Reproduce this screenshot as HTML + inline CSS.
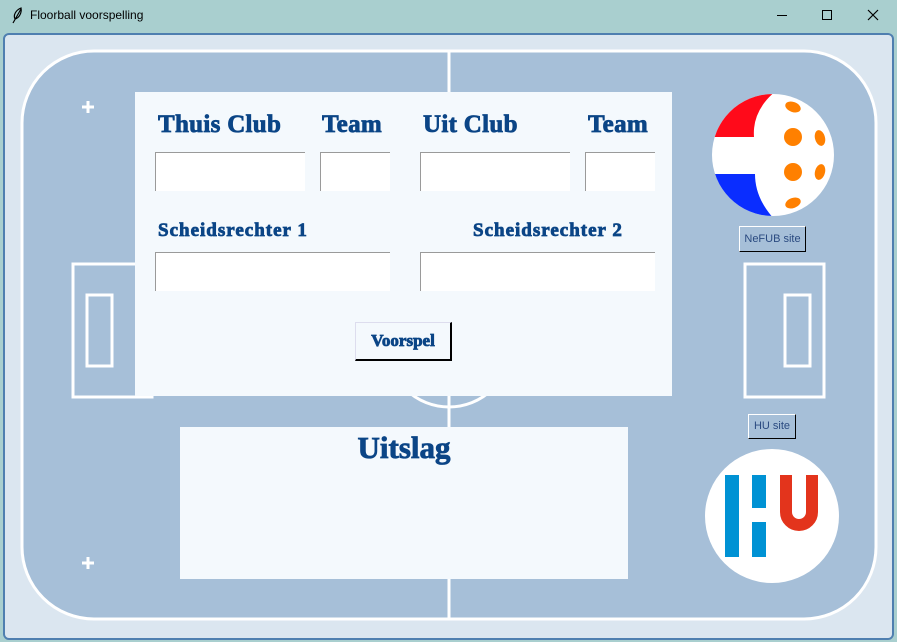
<!DOCTYPE html>
<html><head><meta charset="utf-8"><style>
*{margin:0;padding:0;box-sizing:border-box}
body{width:897px;height:642px;overflow:hidden;background:#a9cfcf;position:relative;font-family:"Liberation Sans",sans-serif}
.a{position:absolute}
.t{font-family:"Liberation Serif",serif;font-weight:bold;color:#0b4586;white-space:nowrap;-webkit-text-stroke:0.8px #0b4586}
.in{position:absolute;background:#fff;border-top:1px solid #9a9a9a;border-left:1px solid #9a9a9a}
.btn{position:absolute;background:#a6bfd8;border:1px solid #fff;border-right:1px solid #000;border-bottom:1px solid #000;font-size:11px;color:#2a4a80;text-align:center}
</style></head><body>
<svg class="a" style="left:10px;top:7px" width="14" height="18"><path d="M3 16L11 2M5 12C3 8 6 3 11 1C12 6 9 11 5 12" fill="none" stroke="#000" stroke-width="1.2"/></svg>
<div class="a" style="left:30px;top:8px;font-size:12px;color:#000">Floorball voorspelling</div>
<div class="a" style="left:777px;top:15px;width:10px;height:1px;background:#000"></div>
<div class="a" style="left:822px;top:10px;width:10px;height:10px;border:1px solid #000"></div>
<svg class="a" style="left:867px;top:9px" width="12" height="12"><path d="M1 1L11 11M11 1L1 11" stroke="#000" stroke-width="1.2"/></svg>
<div class="a" style="left:3px;top:33px;width:891px;height:607px;background:#dbe6f0;border:2px solid #4f7fb0;border-radius:6px"></div>
<svg class="a" style="left:0;top:0" width="897" height="642">
<rect x="22" y="51" width="854" height="568" rx="72" fill="#a6bfd8" stroke="#fff" stroke-width="3"/>
<line x1="449" y1="51" x2="449" y2="619" stroke="#fff" stroke-width="3"/>
<circle cx="449" cy="345" r="62" fill="none" stroke="#fff" stroke-width="3"/>
<rect x="73" y="264" width="79" height="133" fill="none" stroke="#fff" stroke-width="3"/>
<rect x="87" y="295" width="25" height="71" fill="none" stroke="#fff" stroke-width="3"/>
<rect x="745" y="264" width="79" height="133" fill="none" stroke="#fff" stroke-width="3"/>
<rect x="785" y="295" width="25" height="71" fill="none" stroke="#fff" stroke-width="3"/>
<path d="M88 101v12M82 107h12M88 557v12M82 563h12" stroke="#fff" stroke-width="3"/>
<defs><clipPath id="c"><circle cx="773" cy="155" r="61"/></clipPath></defs>
<circle cx="773" cy="155" r="61" fill="#fff"/>
<g clip-path="url(#c)">
<path d="M700 90H777Q752 110 754 137H700Z" fill="#ff0a1a"/>
<path d="M700 174H755Q755 200 777 222H700Z" fill="#0a2dff"/>
</g>
<g fill="#ff8000">
<ellipse cx="793" cy="107" rx="8" ry="5" transform="rotate(20 793 107)"/>
<circle cx="793" cy="137" r="9"/><circle cx="793" cy="172" r="9"/>
<ellipse cx="820" cy="138" rx="5" ry="8" transform="rotate(-15 820 138)"/>
<ellipse cx="820" cy="172" rx="5" ry="8" transform="rotate(15 820 172)"/>
<ellipse cx="793" cy="203" rx="8" ry="5" transform="rotate(-20 793 203)"/>
</g>
<circle cx="772" cy="516" r="67" fill="#fff"/>
<rect x="725" y="475" width="14" height="82" fill="#0092d4"/>
<rect x="752" y="475" width="14" height="33" fill="#0092d4"/>
<rect x="752" y="522" width="14" height="35" fill="#0092d4"/>
<path d="M786 475v37a13 13 0 0 0 26 0v-37" fill="none" stroke="#e3341c" stroke-width="12"/>
</svg>
<div class="a" style="left:135px;top:92px;width:537px;height:304px;background:#f4f9fd"></div>
<div class="a t" style="left:158px;top:111px;font-size:25px;letter-spacing:.3px">Thuis Club</div>
<div class="a t" style="left:322px;top:111px;font-size:25px;letter-spacing:.3px">Team</div>
<div class="a t" style="left:423px;top:111px;font-size:25px;letter-spacing:.3px">Uit Club</div>
<div class="a t" style="left:588px;top:111px;font-size:25px;letter-spacing:.3px">Team</div>
<div class="in" style="left:155px;top:152px;width:150px;height:39px"></div>
<div class="in" style="left:320px;top:152px;width:70px;height:39px"></div>
<div class="in" style="left:420px;top:152px;width:150px;height:39px"></div>
<div class="in" style="left:585px;top:152px;width:70px;height:39px"></div>
<div class="a t" style="left:158px;top:220px;font-size:19px;letter-spacing:1px">Scheidsrechter 1</div>
<div class="a t" style="left:473px;top:220px;font-size:19px;letter-spacing:1px">Scheidsrechter 2</div>
<div class="in" style="left:155px;top:252px;width:235px;height:39px"></div>
<div class="in" style="left:420px;top:252px;width:235px;height:39px"></div>
<div class="a t" style="left:355px;top:322px;width:97px;height:39px;background:#f4f9fd;border:1px solid #dde;border-right:2px solid #000;border-bottom:2px solid #000;font-size:17px;text-align:center;line-height:36px">Voorspel</div>
<div class="a" style="left:180px;top:427px;width:448px;height:152px;background:#f4f9fd"></div>
<div class="a t" style="left:180px;top:430px;width:448px;text-align:center;font-size:31px">Uitslag</div>
<div class="btn" style="left:739px;top:226px;width:67px;height:26px;line-height:24px">NeFUB site</div>
<div class="btn" style="left:748px;top:414px;width:48px;height:25px;line-height:23px">HU site</div>
</body></html>
